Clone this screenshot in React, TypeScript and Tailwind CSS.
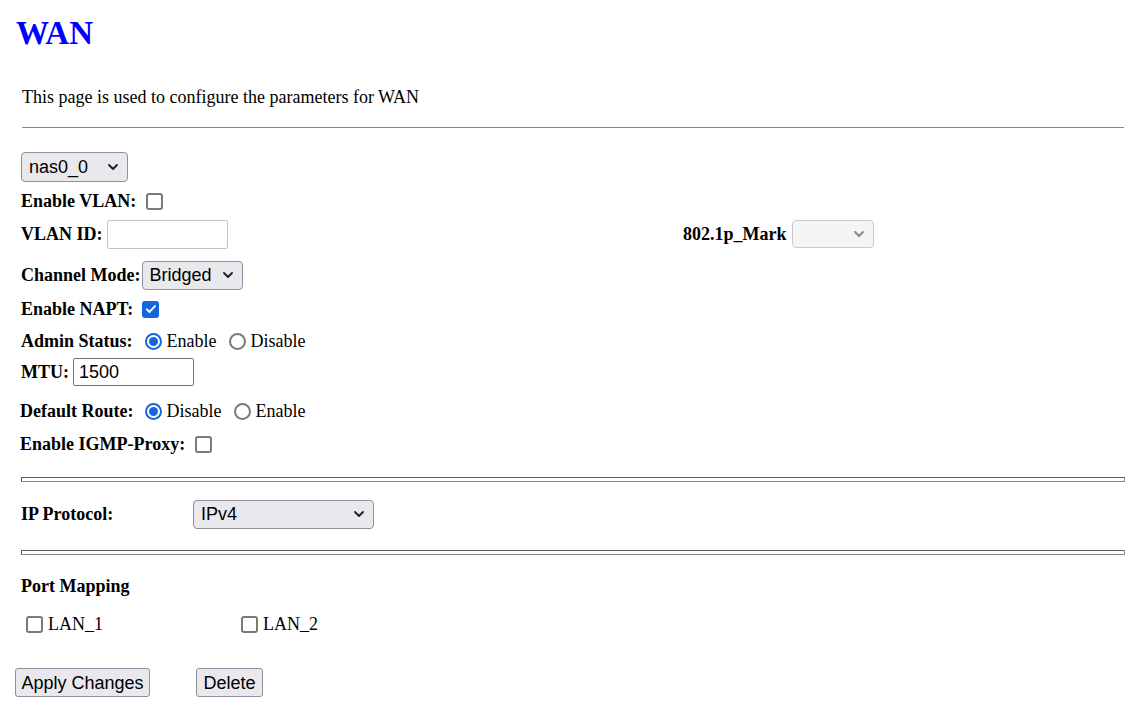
import { ReactNode } from "react";

const serif = "font-['Liberation_Serif','Times_New_Roman',serif]";
const sans = "font-['Liberation_Sans',Arial,sans-serif]";

function Box({ checked }: { checked?: boolean }) {
  if (checked) {
    return (
      <span className="inline-flex h-[17px] w-[17px] shrink-0 items-center justify-center rounded-[3px] bg-[#1466e0]">
        <svg viewBox="0 0 16 16" className="h-[14px] w-[14px]">
          <path d="M3.3 8.4l3 3 6.2-6.8" fill="none" stroke="white" strokeWidth="2.2" strokeLinecap="round" strokeLinejoin="round" />
        </svg>
      </span>
    );
  }
  return <span className="inline-block h-[17px] w-[17px] shrink-0 rounded-[3px] border-2 border-[#7a7a7a] bg-white" />;
}

function Radio({ checked }: { checked?: boolean }) {
  if (checked) {
    return (
      <span className="inline-flex h-[17px] w-[17px] shrink-0 items-center justify-center rounded-full border-2 border-[#1466e0] bg-white">
        <span className="h-[9px] w-[9px] rounded-full bg-[#1466e0]" />
      </span>
    );
  }
  return <span className="inline-block h-[17px] w-[17px] shrink-0 rounded-full border-2 border-[#7a7a7a] bg-white" />;
}

function Select(props: { value: string; className: string; disabled?: boolean }) {
  return (
    <div
      className={`flex items-center justify-between rounded-[4px] border pl-[7px] pr-[8px] text-[18px] ${sans} ${
        props.disabled ? "border-[#c9c9cf] bg-[#f5f5f7] text-[#8a8a8a]" : "border-[#8f8f9d] bg-[#e9e9ed] text-black"
      } ${props.className}`}
    >
      <span className="leading-none">{props.value}</span>
      <svg viewBox="0 0 12 8" className="h-[8px] w-[12px]">
        <path
          d="M2 2l4 4 4-4"
          fill="none"
          stroke={props.disabled ? "#8a8a8a" : "#222"}
          strokeWidth="1.9"
          strokeLinecap="round"
          strokeLinejoin="round"
        />
      </svg>
    </div>
  );
}

function Row({ children, className = "" }: { children: ReactNode; className?: string }) {
  return <div className={`flex h-[30px] items-center ${className}`}>{children}</div>;
}

function Label({ children }: { children: ReactNode }) {
  return <span className="whitespace-nowrap font-bold">{children}</span>;
}

function DoubleRule({ className = "" }: { className?: string }) {
  return (
    <div
      className={`ml-[6px] h-[5px] border border-t-[#5f5f5f] border-l-[#5f5f5f] border-b-[#8a8a8a] border-r-[#8a8a8a] ${className}`}
    />
  );
}

export default function App() {
  return (
    <div className={`min-h-screen bg-white pb-[20px] pl-[15px] pr-[23px] pt-[15px] text-[18px] text-black ${serif}`}>
      <h1 className="ml-[1px] h-[36px] text-[33px] font-bold leading-[36px] text-[#0000ff]">WAN</h1>

      <p className="ml-[7px] mt-[36px] h-[20px] leading-[20px]">This page is used to configure the parameters for WAN</p>

      <div className="ml-[7px] mr-[1px] mt-[20px] h-px bg-[#8a8a8a]" />

      <div className="ml-[6px] mt-[24px]">
        <Select value="nas0_0" className="h-[30px] w-[107px]" />
      </div>

      <Row className="ml-[6px] mt-[4px]">
        <Label>Enable VLAN:</Label>
        <span className="ml-[10px] flex">
          <Box />
        </span>
      </Row>

      <Row className="ml-[6px] mt-[3px]">
        <div className="flex w-[662px] items-center">
          <Label>VLAN ID:</Label>
          <div className="ml-[4px] h-[29px] w-[121px] rounded-[2px] border border-[#c4c4c4] bg-white" />
        </div>
        <Label>802.1p_Mark</Label>
        <Select value="" disabled className="ml-[5px] h-[28px] w-[82px]" />
      </Row>

      <Row className="ml-[6px] mt-[11px]">
        <Label>Channel Mode:</Label>
        <Select value="Bridged" className="ml-[1px] h-[29px] w-[101px]" />
      </Row>

      <Row className="ml-[6px] mt-[4px]">
        <Label>Enable NAPT:</Label>
        <span className="ml-[9px] flex">
          <Box checked />
        </span>
      </Row>

      <Row className="ml-[6px] mt-[2px]">
        <Label>Admin Status:</Label>
        <span className="ml-[12px] flex">
          <Radio checked />
        </span>
        <span className="ml-[5px]">Enable</span>
        <span className="ml-[12px] flex">
          <Radio />
        </span>
        <span className="ml-[5px]">Disable</span>
      </Row>

      <Row className="ml-[6px] mt-[1px]">
        <Label>MTU:</Label>
        <div className={`ml-[4px] flex h-[28px] w-[121px] items-center rounded-[2px] border border-[#767676] bg-white pl-[5px] leading-none ${sans}`}>
          1500
        </div>
      </Row>

      <Row className="ml-[5px] mt-[9px]">
        <Label>Default Route:</Label>
        <span className="ml-[12px] flex">
          <Radio checked />
        </span>
        <span className="ml-[4px]">Disable</span>
        <span className="ml-[13px] flex">
          <Radio />
        </span>
        <span className="ml-[4px]">Enable</span>
      </Row>

      <Row className="ml-[5px] mt-[3px]">
        <Label>Enable IGMP-Proxy:</Label>
        <span className="ml-[10px] flex">
          <Box />
        </span>
      </Row>

      <DoubleRule className="mt-[18px]" />

      <Row className="ml-[6px] mt-[17px]">
        <div className="w-[172px]">
          <Label>IP Protocol:</Label>
        </div>
        <Select value="IPv4" className="h-[29px] w-[181px]" />
      </Row>

      <DoubleRule className="mt-[21px]" />

      <Row className="ml-[6px] mt-[16px]">
        <Label>Port Mapping</Label>
      </Row>

      <Row className="ml-[11px] mt-[8px]">
        <div className="flex w-[215px] items-center">
          <Box />
          <span className="ml-[5px]">LAN_1</span>
        </div>
        <div className="flex items-center">
          <Box />
          <span className="ml-[5px]">LAN_2</span>
        </div>
      </Row>

      <div className={`mt-[29px] flex items-center text-[18px] ${sans}`}>
        <button className="h-[29px] w-[135px] rounded-[3px] border border-[#8f8f9d] bg-[#e9e9ed] leading-none">
          Apply Changes
        </button>
        <button className="ml-[46px] h-[29px] w-[67px] rounded-[3px] border border-[#8f8f9d] bg-[#e9e9ed] leading-none">
          Delete
        </button>
      </div>
    </div>
  );
}
